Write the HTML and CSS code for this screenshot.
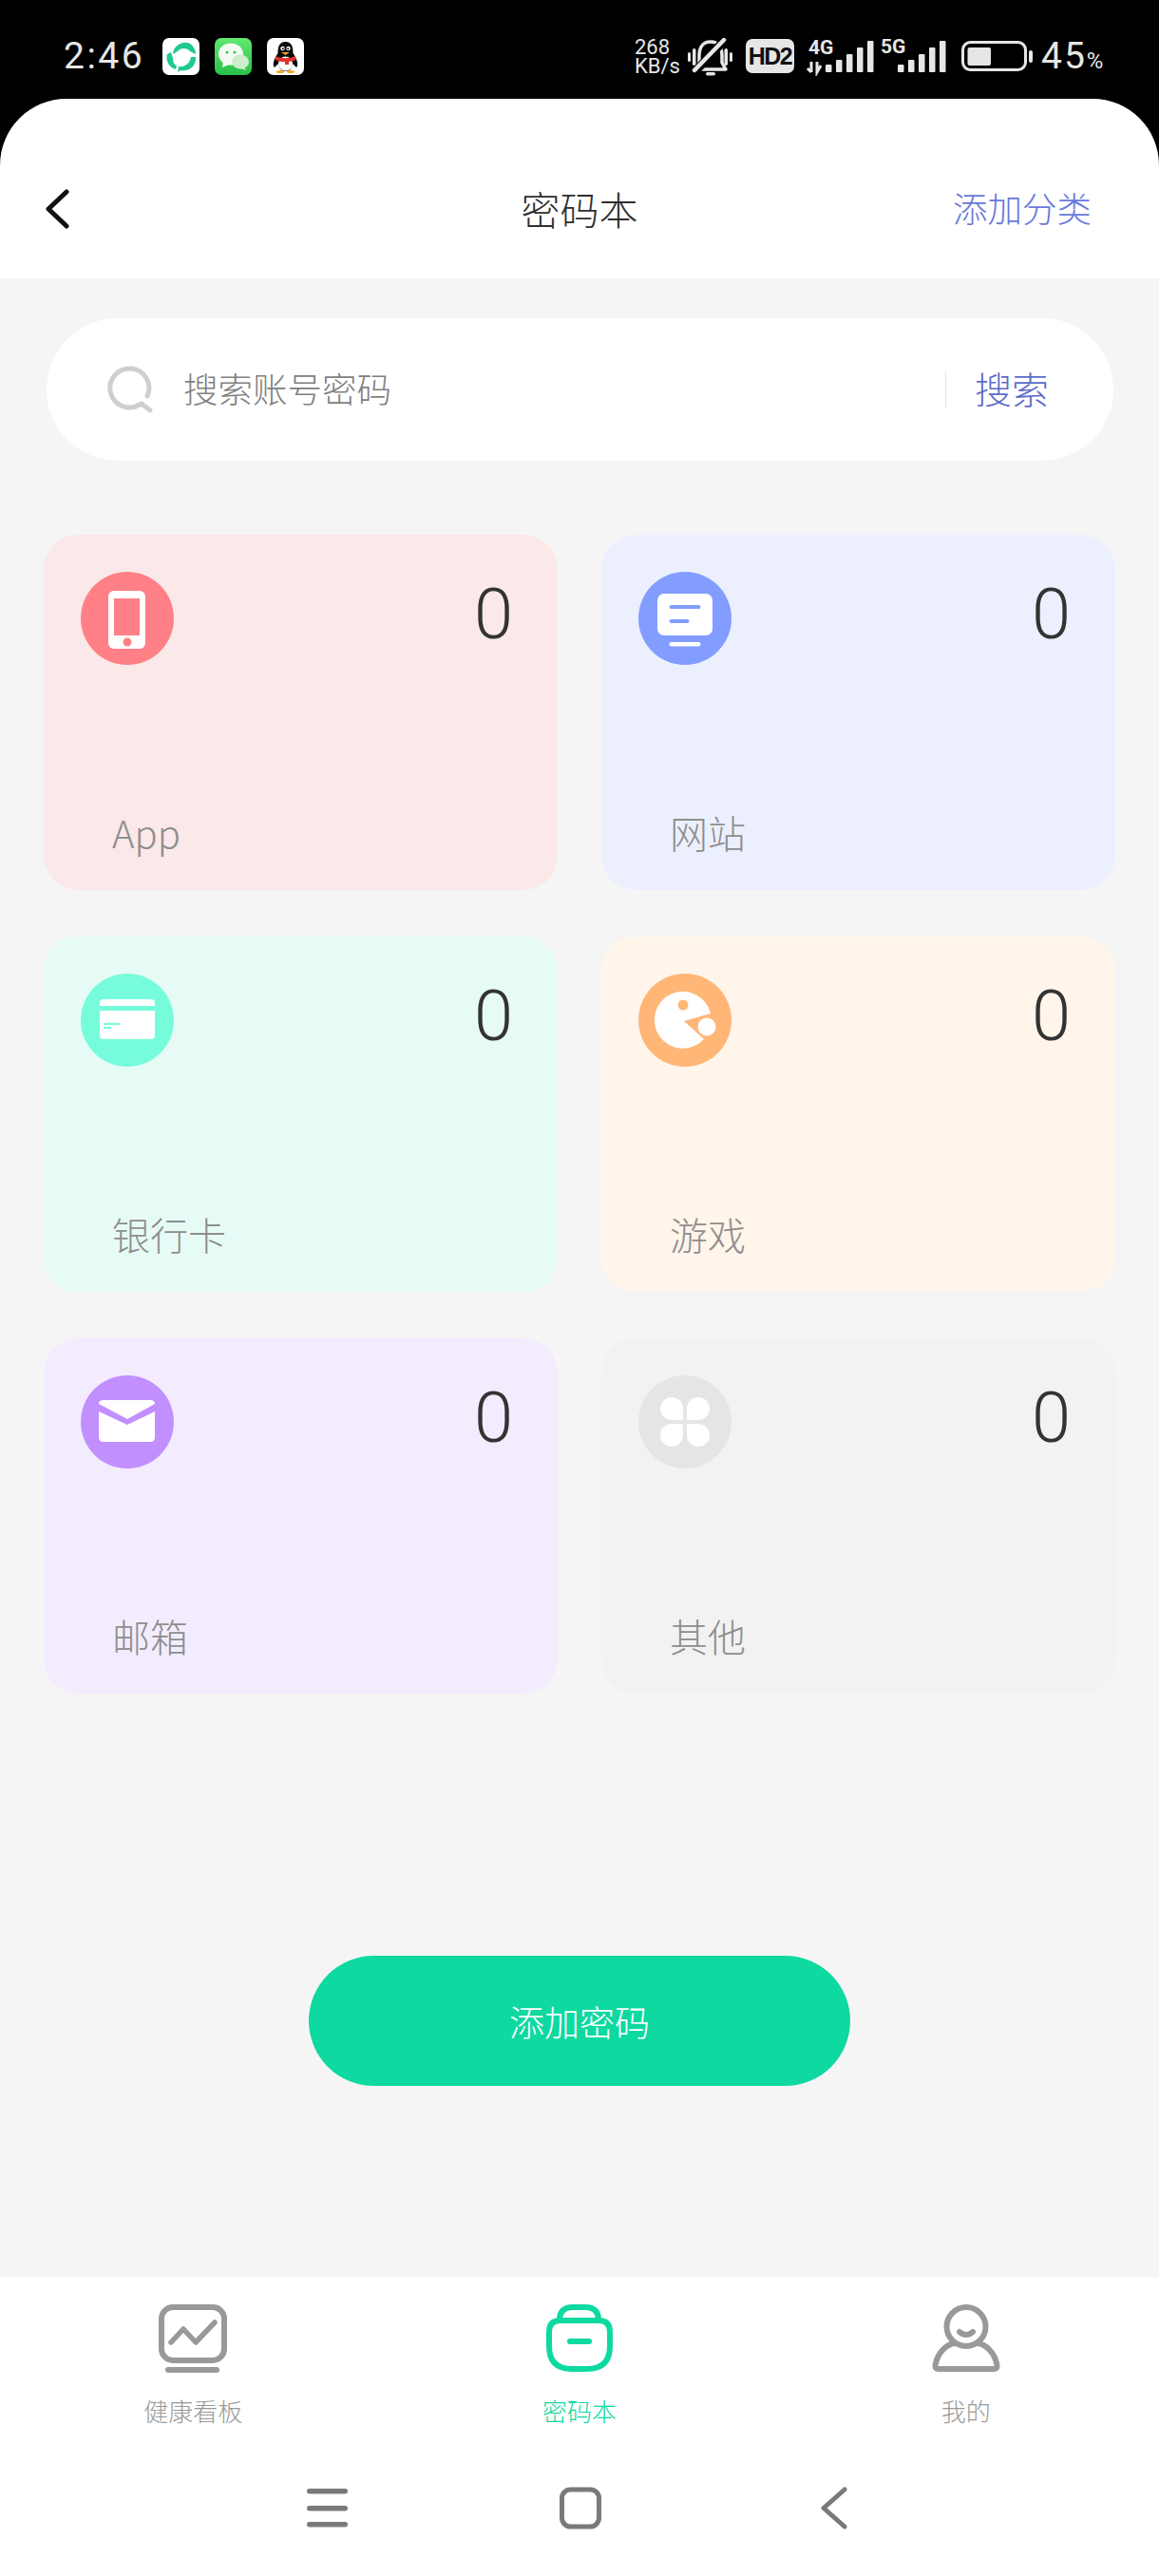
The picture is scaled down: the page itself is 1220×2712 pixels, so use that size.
FILE: index.html
```html
<!DOCTYPE html>
<html lang="zh-CN">
<head>
  <meta charset="UTF-8">
  <title>密码本</title>
  <link rel="stylesheet" href="styles.css">
</head>
<body>
<div class="app">

  <div class="top">
    <div class="status-bar">
      <div class="status-left">
        <span class="time">2:46</span>
        <svg class="app-icon" viewBox="0 0 39 39">
          <rect width="39" height="39" rx="7" fill="#fff"/>
          <path d="M11 17C11 9 21 2 29 6C32 8 35 12 35 17L29 14C26 10 19 10 16 14Z" fill="#1fca8c"/>
          <path d="M35 20C36 29 28 36 19 34L16 36L17 30C23 31 29 27 30 20Z" fill="#1fca8c"/>
          <path d="M14 33C7 31 3 24 5 17L9 15L11 21C11 25 12 28 15 29Z" fill="#1fca8c"/>
        </svg>
        <svg class="app-icon" viewBox="0 0 39 39">
          <defs>
            <linearGradient id="wx" x1="0" y1="0" x2="0" y2="1">
              <stop offset="0" stop-color="#62e86f"/>
              <stop offset="1" stop-color="#28c04a"/>
            </linearGradient>
          </defs>
          <rect width="39" height="39" rx="7" fill="url(#wx)"/>
          <ellipse cx="17" cy="17" rx="13" ry="11.500" fill="#f4fbf2"/>
          <path d="M9 25L8 31L15 28Z" fill="#f4fbf2"/>
          <ellipse cx="27" cy="25" rx="9" ry="7.500" fill="#cdeecb"/>
          <path d="M31 30L33 34L27 32Z" fill="#cdeecb"/>
          <circle cx="13" cy="15" r="1.600" fill="#3cc955"/>
          <circle cx="21" cy="15" r="1.600" fill="#3cc955"/>
        </svg>
        <svg class="app-icon" viewBox="0 0 39 39">
          <rect width="39" height="39" rx="7" fill="#fff"/>
          <path d="M19.500 4C12 4 11.500 11 11.500 16C8 21 5 28 8 31L12 27C13 32 15 35 19.500 35C24 35 26 32 27 27L31 31C34 28 31 21 27.500 16C27.500 11 27 4 19.500 4Z" fill="#0b0b0b"/>
          <ellipse cx="19.500" cy="27" rx="7.500" ry="7.500" fill="#fff"/>
          <circle cx="16.500" cy="11" r="2.200" fill="#fff"/>
          <circle cx="22.500" cy="11" r="2.200" fill="#fff"/>
          <circle cx="16.800" cy="11.300" r="1" fill="#111"/>
          <circle cx="22.200" cy="11.300" r="1" fill="#111"/>
          <path d="M15 15H24L19.500 18Z" fill="#f4a623"/>
          <path d="M9 19C15 22 24 22 30 19L30 23C26 25 25 24.500 23 25V28H19V25C15 25 12 25 9 23Z" fill="#e0322b"/>
          <ellipse cx="14" cy="35.500" rx="4" ry="1.500" fill="#f4a623"/>
          <ellipse cx="25" cy="35.500" rx="4" ry="1.500" fill="#f4a623"/>
        </svg>
      </div>
      <div class="status-right">
        <div class="net-speed">
          <span>268</span>
          <span>KB/s</span>
        </div>
        <svg class="bell" width="47" height="40" viewBox="0 0 47 40">
          <rect x="0" y="15" width="3" height="10" rx="1.500" fill="#e6e6e6"/>
          <rect x="5" y="11" width="3.500" height="18" rx="1.700" fill="#e6e6e6"/>
          <rect x="38.500" y="11" width="3.500" height="18" rx="1.700" fill="#e6e6e6"/>
          <rect x="44" y="15" width="3" height="10" rx="1.500" fill="#e6e6e6"/>
          <path d="M24 4C15 4 12 11 12 19V26L8 33H40L36 26V19C36 11 33 4 24 4Z" fill="none" stroke="#e6e6e6" stroke-width="3.500" stroke-linejoin="round"/>
          <rect x="19" y="36" width="10" height="3.500" rx="1.700" fill="#e6e6e6"/>
          <path d="M40 1L9 34" stroke="#000" stroke-width="9"/>
          <path d="M38 2L7 34" stroke="#e6e6e6" stroke-width="4.500" stroke-linecap="round"/>
        </svg>
        <span class="hd-badge">HD2</span>
        <svg class="signal signal-4g" width="72" height="60" viewBox="0 -20 72 60">
          <text x="3" y="17" class="signal-text">4G</text>
          <path d="M6 25V36M2 32L6 36M12 25V36L16 29" fill="none" stroke="#e6e6e6" stroke-width="3"/>
          <rect x="21" y="28" width="6.500" height="8" rx="1" fill="#e6e6e6"/>
          <rect x="32" y="23" width="6.500" height="13" rx="1" fill="#e6e6e6"/>
          <rect x="43" y="17" width="6.500" height="19" rx="1" fill="#e6e6e6"/>
          <rect x="54" y="10" width="6.500" height="26" rx="1" fill="#e6e6e6"/>
          <rect x="65" y="3" width="6.500" height="33" rx="1" fill="#e6e6e6"/>
        </svg>
        <svg class="signal signal-5g" width="69" height="60" viewBox="0 -20 69 60">
          <text x="0" y="16" class="signal-text">5G</text>
          <rect x="18" y="28" width="6.500" height="8" rx="1" fill="#e6e6e6"/>
          <rect x="29" y="23" width="6.500" height="13" rx="1" fill="#e6e6e6"/>
          <rect x="40" y="17" width="6.500" height="19" rx="1" fill="#e6e6e6"/>
          <rect x="51" y="10" width="6.500" height="26" rx="1" fill="#e6e6e6"/>
          <rect x="62" y="3" width="6.500" height="33" rx="1" fill="#e6e6e6"/>
        </svg>
        <svg class="battery" width="75" height="40" viewBox="0 0 75 40">
          <rect x="1.500" y="4.500" width="66" height="29" rx="8" fill="none" stroke="#e6e6e6" stroke-width="3"/>
          <rect x="6.500" y="10" width="24.500" height="19" rx="2" fill="#e6e6e6"/>
          <rect x="71" y="13" width="4" height="13" rx="2" fill="#e6e6e6"/>
        </svg>
        <span class="battery-text">45<small>%</small></span>
      </div>
    </div>

    <header class="header">
      <div class="back">
        <svg width="26" height="42" viewBox="0 0 26 42">
          <path d="M23 3L4 21L23 39" fill="none" stroke="#111" stroke-width="5" stroke-linecap="round" stroke-linejoin="round"/>
        </svg>
      </div>
      <h1 class="title">密码本</h1>
      <div class="add-cat">添加分类</div>
    </header>
  </div>

  <main class="main">
    <div class="search">
      <svg class="search-icon" width="48" height="50" viewBox="0 0 48 50">
        <path d="M34 41A20.500 20.500 0 1 1 42 32" fill="none" stroke="#cfcfcf" stroke-width="5" stroke-linecap="round"/>
        <path d="M36 40L45 47" fill="none" stroke="#cfcfcf" stroke-width="5" stroke-linecap="round"/>
      </svg>
      <span class="search-text">搜索账号密码</span>
      <span class="search-line"></span>
      <span class="search-btn">搜索</span>
    </div>

    <div class="cards">
      <div class="card card-app">
        <div class="card-top">
          <svg class="cat-icon" viewBox="0 0 98 98">
            <circle cx="49" cy="49" r="49" fill="#ff8086"/>
            <rect x="29" y="20" width="39" height="61" rx="6" fill="#fff"/>
            <rect x="35" y="28" width="27" height="39" fill="#ff8086"/>
            <circle cx="49" cy="74" r="4.500" fill="#ff8086"/>
          </svg>
          <span class="count">0</span>
        </div>
        <div class="card-name">App</div>
      </div>

      <div class="card card-web">
        <div class="card-top">
          <svg class="cat-icon" viewBox="0 0 98 98">
            <circle cx="49" cy="49" r="49" fill="#829dff"/>
            <rect x="20" y="23" width="58" height="44" rx="7" fill="#fff"/>
            <rect x="32.500" y="35" width="33" height="4" rx="2" fill="#829dff"/>
            <rect x="32.500" y="50" width="21" height="4" rx="2" fill="#829dff"/>
            <rect x="32.500" y="74" width="33" height="4.500" rx="2.200" fill="#fff"/>
          </svg>
          <span class="count">0</span>
        </div>
        <div class="card-name">网站</div>
      </div>

      <div class="card card-bank">
        <div class="card-top">
          <svg class="cat-icon" viewBox="0 0 98 98">
            <circle cx="49" cy="49" r="49" fill="#76fcdb"/>
            <path d="M24 27H74Q78 27 78 31V34H20V31Q20 27 24 27Z" fill="#fff"/>
            <path d="M20 39H78V65Q78 69 74 69H24Q20 69 20 65Z" fill="#fff"/>
            <rect x="24" y="52" width="17" height="2" fill="#76fcdb"/>
            <rect x="24" y="56" width="8" height="2" fill="#76fcdb"/>
          </svg>
          <span class="count">0</span>
        </div>
        <div class="card-name">银行卡</div>
      </div>

      <div class="card card-game">
        <div class="card-top">
          <svg class="cat-icon" viewBox="0 0 98 98">
            <circle cx="49" cy="49" r="49" fill="#ffb677"/>
            <path d="M76 42A30 30 0 1 0 69 69L48 50Z" fill="#fff"/>
            <circle cx="47" cy="33" r="5.500" fill="#ffb677"/>
            <circle cx="72" cy="56" r="9.500" fill="#fff"/>
          </svg>
          <span class="count">0</span>
        </div>
        <div class="card-name">游戏</div>
      </div>

      <div class="card card-mail">
        <div class="card-top">
          <svg class="cat-icon" viewBox="0 0 98 98">
            <circle cx="49" cy="49" r="49" fill="#c28fff"/>
            <path d="M24 26H73Q78 26 78 30L49 46L19 30Q19 26 24 26Z" fill="#fff"/>
            <path d="M19 38L49 52L78 38V65Q78 70 73 70H24Q19 70 19 65Z" fill="#fff"/>
          </svg>
          <span class="count">0</span>
        </div>
        <div class="card-name">邮箱</div>
      </div>

      <div class="card card-other">
        <div class="card-top">
          <svg class="cat-icon" viewBox="0 0 98 98">
            <circle cx="49" cy="49" r="49" fill="#e5e5e5"/>
            <path d="M35 23A12 12 0 0 1 47 35V45.500Q47 47 45.500 47H35A12 12 0 0 1 35 23Z" fill="#fff"/>
            <path d="M63 23A12 12 0 0 0 51 35V45.500Q51 47 52.500 47H63A12 12 0 0 0 63 23Z" fill="#fff"/>
            <path d="M35 75A12 12 0 0 0 47 63V52.500Q47 51 45.500 51H35A12 12 0 0 0 35 75Z" fill="#fff"/>
            <path d="M63 75A12 12 0 0 1 51 63V52.500Q51 51 52.500 51H63A12 12 0 0 1 63 75Z" fill="#fff"/>
          </svg>
          <span class="count">0</span>
        </div>
        <div class="card-name">其他</div>
      </div>
    </div>

    <button class="add-btn">添加密码</button>
  </main>

  <footer class="footer">
    <div class="tabs">
      <div class="tab">
        <svg width="72" height="72" viewBox="0 0 72 72">
          <rect x="3" y="3" width="66" height="56" rx="12" fill="none" stroke="#999" stroke-width="6"/>
          <path d="M13 40L26 26L39 40L59 19" fill="none" stroke="#999" stroke-width="5.500" stroke-linecap="round" stroke-linejoin="round"/>
          <rect x="7" y="66" width="57" height="6" rx="3" fill="#999"/>
        </svg>
        <span>健康看板</span>
      </div>
      <div class="tab tab-active">
        <svg width="72" height="72" viewBox="0 0 72 72">
          <path d="M16 17H56Q68 17 68 29V44Q68 68 44 68H28Q4 68 4 44V29Q4 17 16 17Z" fill="none" stroke="#0dd9a0" stroke-width="6"/>
          <path d="M15 17Q15 3 29 3H42Q56 3 56 17" fill="none" stroke="#0dd9a0" stroke-width="6"/>
          <path d="M26 39H46" fill="none" stroke="#0dd9a0" stroke-width="6" stroke-linecap="round"/>
        </svg>
        <span>密码本</span>
      </div>
      <div class="tab">
        <svg width="72" height="72" viewBox="0 0 72 72">
          <path d="M7 68H65Q69 68 68.500 64C66 50 56 42 48 41H24C16 42 6 50 3.500 64Q3 68 7 68Z" fill="#fff" stroke="#999" stroke-width="6"/>
          <circle cx="36" cy="23.500" r="20.500" fill="#fff" stroke="#999" stroke-width="6"/>
          <path d="M29 29Q36 35 43 29" fill="none" stroke="#999" stroke-width="6" stroke-linecap="round"/>
        </svg>
        <span>我的</span>
      </div>
    </div>

    <div class="nav">
      <svg width="44" height="46" viewBox="0 0 44 46">
        <rect x="1" y="2" width="43" height="5.500" rx="2.700" fill="#7a7a7a"/>
        <rect x="1" y="20" width="43" height="5.500" rx="2.700" fill="#7a7a7a"/>
        <rect x="1" y="37" width="43" height="5.500" rx="2.700" fill="#7a7a7a"/>
      </svg>
      <svg width="44" height="46" viewBox="0 0 44 46">
        <rect x="2.500" y="3" width="39" height="39" rx="9" fill="none" stroke="#7a7a7a" stroke-width="5"/>
      </svg>
      <svg width="44" height="46" viewBox="0 0 44 46">
        <path d="M33 3L11 22.500L33 42" fill="none" stroke="#7a7a7a" stroke-width="5" stroke-linecap="round" stroke-linejoin="round"/>
      </svg>
    </div>
  </footer>

</div>
</body>
</html>
```

FILE: styles.css
```css
* { box-sizing: border-box; }

body {
  margin: 0;
  font-family: "Noto Sans CJK SC", "Noto Sans", sans-serif;
  font-weight: 300;
  background: #f5f5f5;
}

.app {
  width: 1220px;
  height: 2712px;
  display: flex;
  flex-direction: column;
}

/* status bar */
.top {
  background: #000;
}

.status-bar {
  height: 104px;
  padding: 40px 58px 0 67px;
  display: flex;
  justify-content: space-between;
  align-items: flex-start;
  color: #e6e6e6;
  font-family: Roboto, sans-serif;
}

.status-left {
  display: flex;
  align-items: flex-start;
}

.time {
  width: 104px;
  font-size: 39px;
  line-height: 39px;
  letter-spacing: 2.500px;
  font-weight: 400;
}

.app-icon {
  width: 39px;
  height: 39px;
  margin-right: 16px;
}

.status-right {
  display: flex;
  align-items: flex-start;
}

.net-speed {
  width: 44px;
  margin-right: 12px;
  font-size: 22px;
  line-height: 20px;
  display: flex;
  flex-direction: column;
  font-weight: 400;
}

.bell {
  margin-right: 14px;
}

.hd-badge {
  width: 51px;
  height: 36px;
  margin: 1px 12px 0 0;
  border-radius: 7px;
  background: #e6e6e6;
  color: #111;
  font-family: "Liberation Sans", sans-serif;
  font-size: 25px;
  font-weight: 700;
  line-height: 36px;
  letter-spacing: -1.500px;
  text-align: center;
}

/* taller than the bars so the 4G / 5G text has room above */
.signal {
  margin-top: -20px;
}

.signal-4g {
  margin-right: 7px;
}

.signal-5g {
  margin-right: 16px;
}

.signal-text {
  font-family: Roboto, sans-serif;
  font-size: 21px;
  font-weight: 700;
  fill: #e6e6e6;
}

.battery {
  margin-right: 9px;
}

.battery-text {
  width: 66px;
  font-size: 39px;
  line-height: 39px;
  letter-spacing: 2px;
  font-weight: 400;
  white-space: nowrap;
}

.battery-text small {
  font-size: 24px;
  letter-spacing: 0;
}

/* header */
.header {
  height: 189px;
  padding-top: 41px;
  background: #fff;
  border-radius: 70px 70px 0 0;
  display: grid;
  grid-template-columns: 1fr auto 1fr;
  align-items: center;
}

.back {
  padding: 2px 0 0 47px;
  display: flex;
}

.title {
  margin: 0;
  font-size: 41px;
  font-weight: 300;
  line-height: 48px;
  color: #2e2e2e;
}

.add-cat {
  padding-right: 71px;
  text-align: right;
  font-size: 36.500px;
  line-height: 48px;
  color: #6a78dc;
}

/* main */
.main {
  flex: 1;
  padding-top: 42px;
  display: flex;
  flex-direction: column;
}

.search {
  width: 1123px;
  height: 150px;
  margin-left: 49px;
  padding: 0 68px 0 64px;
  background: #fff;
  border-radius: 75px;
  display: flex;
  align-items: center;
}

.search-icon {
  margin-right: 32px;
}

.search-text {
  flex: 1;
  margin-bottom: 4px;
  font-size: 36.500px;
  color: #808080;
}

.search-line {
  width: 1px;
  height: 38px;
  margin-right: 30px;
  background: #e2e2e2;
}

.search-btn {
  margin-bottom: 4px;
  font-size: 39px;
  color: #5c6bc8;
}

.cards {
  margin: 78px 0 0 46px;
  display: grid;
  grid-template-columns: 541px 541px;
  grid-auto-rows: 374px;
  gap: 49px 46px;
}

.card {
  padding: 39px 47px 41px 39px;
  border-radius: 36px;
  display: flex;
  flex-direction: column;
}

.card-app { background: #fbe8e9; }
.card-web { background: #ecf0fe; }
.card-bank { background: #e6fbf5; }
.card-game { background: #fff5ea; }
.card-mail { background: #f3ecff; }
.card-other { background: #f2f2f2; }

.card-top {
  display: flex;
  justify-content: space-between;
  align-items: flex-start;
}

.cat-icon {
  width: 98px;
  height: 98px;
}

.count {
  margin-top: 8px;
  font-family: Roboto, sans-serif;
  font-size: 74px;
  font-weight: 300;
  line-height: 74px;
  color: #333;
}

.card-name {
  margin-top: auto;
  padding-left: 33px;
  font-size: 40px;
  line-height: 39px;
  color: #8e8e8e;
}

.add-btn {
  width: 570px;
  height: 137px;
  margin: 276px 0 0 325px;
  border: none;
  border-radius: 69px;
  background: #0dd9a0;
  color: #fff;
  font-family: inherit;
  font-size: 37px;
  font-weight: 300;
}

/* bottom */
.footer {
  height: 315px;
  padding-top: 29px;
  background: #fff;
}

.tabs {
  display: grid;
  grid-template-columns: repeat(3, 1fr);
}

.tab {
  display: flex;
  flex-direction: column;
  align-items: center;
  font-size: 26px;
  line-height: 26px;
  color: #999;
}

.tab span {
  margin-top: 27px;
}

.tab-active {
  color: #0dd9a0;
}

.nav {
  margin-top: 67px;
  padding-left: 322px;
  display: flex;
  gap: 223px;
}
```
